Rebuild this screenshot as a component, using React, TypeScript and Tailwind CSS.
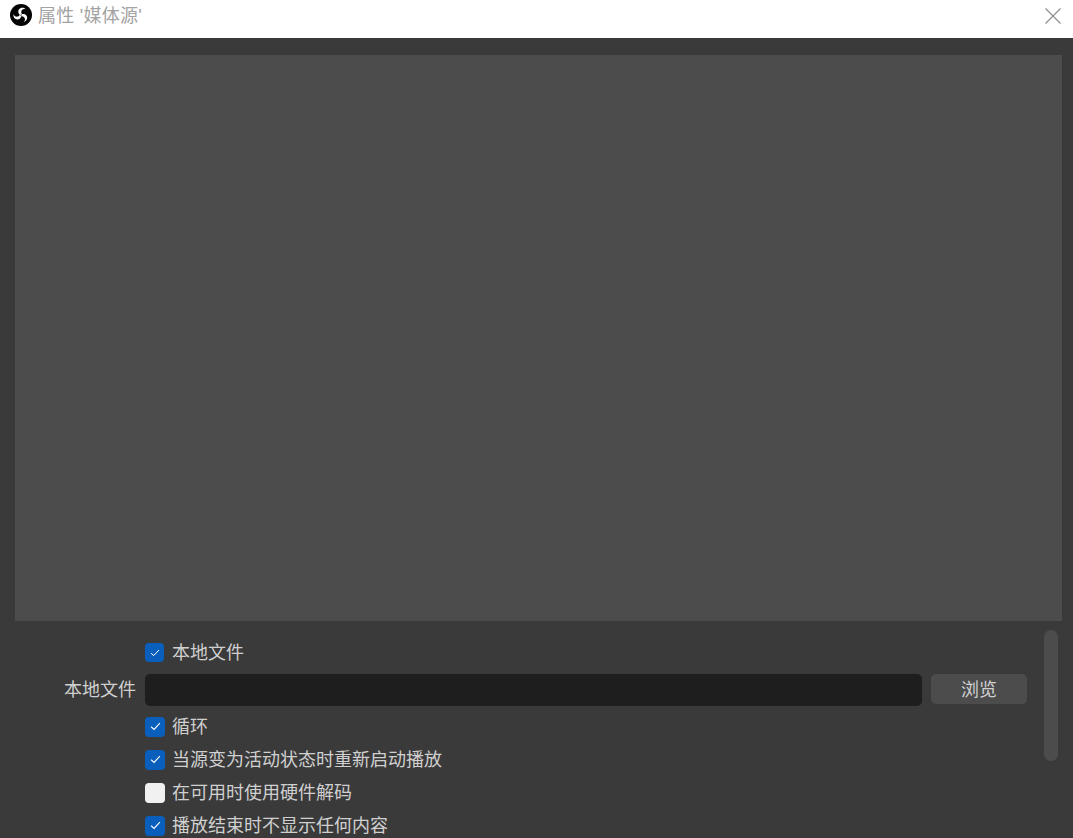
const font = { fontFamily: '"Liberation Sans", "Noto Sans CJK SC", sans-serif' };

function Check({ checked, label, small }: { checked: boolean; label: string; small?: boolean }) {
  return (
    <div className={small ? "flex items-center h-[19px] gap-[8px]" : "flex items-center h-[19px] gap-[7px]"}>
      {checked ? (
        <span className={small ? "flex items-center justify-center w-[19px] h-[19px] rounded-[4px] bg-[#0a5fbd] shrink-0" : "flex items-center justify-center w-[20px] h-[20px] rounded-[4px] bg-[#0a5fbd] shrink-0"}>
          <svg width={small ? 10 : 11} height={small ? 8 : 9} viewBox="0 0 10 8" fill="none" stroke="#ffffff" strokeWidth="1">
            <path d="M1 4.2 L3.7 6.6 L9 1" />
          </svg>
        </span>
      ) : (
        <span className="w-[20px] h-[20px] rounded-[4px] bg-[#f1f1f1] shrink-0" />
      )}
      <span className="text-[18px] leading-[20px] text-[#d0d0d0] whitespace-nowrap">{label}</span>
    </div>
  );
}

const blade = "M11 11.9 C8.3 9.8 8.3 6 11.5 4.5 C13.4 3.7 15.5 4.1 17 5.6 C14.9 5.1 13.1 5.8 12.5 7.6 C12 9 12.4 10.3 13.2 11.2 C12.4 11.2 11.5 11.4 11 11.9 Z";

function ObsLogo() {
  return (
    <svg width="22" height="22" viewBox="0 0 24 24" className="shrink-0 self-start mt-[4px]">
      <circle cx="12" cy="12" r="12" fill="#050505" />
      <g fill="#ffffff">
        <path d={blade} />
        <path d={blade} transform="rotate(120 12 12)" />
        <path d={blade} transform="rotate(240 12 12)" />
      </g>
    </svg>
  );
}

export default function App() {
  return (
    <div style={font} className="w-[1073px] h-[838px] overflow-hidden flex flex-col bg-[#3a3a3a]">
      <header className="h-[38px] shrink-0 bg-white flex items-start pl-[10px] pr-[12px]">
        <ObsLogo />
        <span className="ml-[6px] mt-[4px] text-[18px] leading-[24px] tracking-[0.25px] text-[#a3a3a3]">属性 '媒体源'</span>
        <svg width="16" height="16" viewBox="0 0 16 16" className="ml-auto mt-[8px]" fill="none" stroke="#8f8f8f" strokeWidth="1.2">
          <path d="M0.5 0.5 L15.5 15.5 M15.5 0.5 L0.5 15.5" />
        </svg>
      </header>
      <div className="h-[566px] shrink-0 mt-[17px] mx-[11px] ml-[15px] bg-[#4c4c4c]" />
      <div className="flex mt-[9px] pr-[15px]">
        <div className="flex-1 min-w-0 flex flex-col pl-[145px] pt-[13px]">
          <Check checked small label="本地文件" />
          <div className="relative flex items-center gap-[9px] mt-[12px] h-[32px]">
            <span className="absolute right-full mr-[9px] top-[6px] text-[18px] leading-[20px] text-[#d0d0d0] whitespace-nowrap">本地文件</span>
            <div className="w-[777px] h-[32px] rounded-[5px] bg-[#1e1e1e]" />
            <button className="w-[96px] h-[30px] -mt-[2px] pt-[2px] rounded-[5px] bg-[#4c4c4c] text-[18px] leading-[20px] text-[#d0d0d0]">浏览</button>
          </div>
          <div className="flex flex-col gap-[14px] mt-[11px]">
            <Check checked label="循环" />
            <Check checked label="当源变为活动状态时重新启动播放" />
            <Check checked={false} label="在可用时使用硬件解码" />
            <Check checked label="播放结束时不显示任何内容" />
          </div>
        </div>
        <div className="w-[14px] h-[131px] rounded-full bg-[#4c4c4c] shrink-0" />
      </div>
    </div>
  );
}
